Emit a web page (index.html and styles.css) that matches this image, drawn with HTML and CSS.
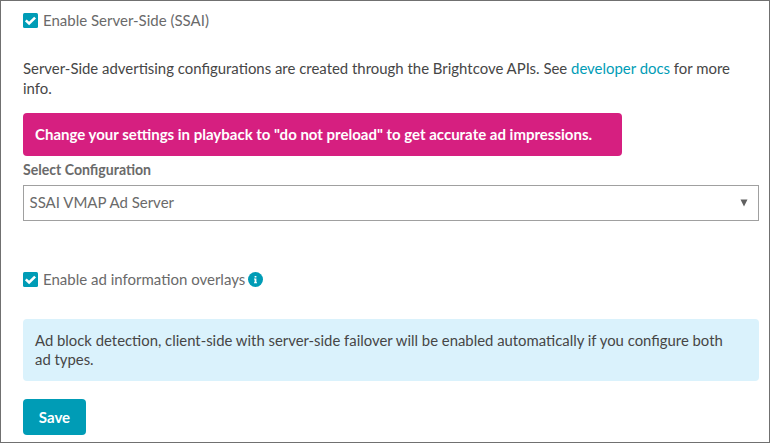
FILE: index.html
```html
<!DOCTYPE html>
<html lang="en">
<head>
<meta charset="utf-8">
<title>Advertising settings</title>
<link rel="stylesheet" href="styles.css">
</head>
<body>
<main class="panel">
  <div class="option">
    <svg class="check" viewBox="0 0 15 15"><rect width="15" height="15" rx="1.500"/><path d="M2.800 7.400 6.100 10.500 12.100 4.600"/></svg>
    <span>Enable Server-Side (SSAI)</span>
  </div>
  <p class="intro">Server-Side advertising configurations are created through the Brightcove APIs. See <a class="link">developer docs</a> for more info.</p>
  <div class="alert">Change your settings in playback to "do not preload" to get accurate ad impressions.</div>
  <div class="label">Select Configuration</div>
  <div class="select"><span>SSAI VMAP Ad Server</span><svg class="arrow" viewBox="0 0 8 8"><path d="M.5.5H7.500L4 7.500Z"/></svg></div>
  <div class="option overlays">
    <svg class="check" viewBox="0 0 15 15"><rect width="15" height="15" rx="1.500"/><path d="M2.800 7.400 6.100 10.500 12.100 4.600"/></svg>
    <span>Enable ad information overlays</span>
    <svg class="info" viewBox="0 0 15 15"><circle cx="7.500" cy="7.500" r="7.500"/><path d="M6.600 4h1.800v1.500H6.600zM6 6.500h2.400v3.800H9v1H6v-1h.6V7.500H6z"/></svg>
  </div>
  <div class="notice">Ad block detection, client-side with server-side failover will be enabled automatically if you configure both ad types.</div>
  <button class="save">Save</button>
</main>
</body>
</html>
```
FILE: styles.css
```css
* { box-sizing: border-box; }
body { margin: 0; background: #fff; }
.panel {
  display: flex;
  flex-direction: column;
  width: 770px;
  height: 443px;
  padding: 9px 10px 0 22px;
  border: 1px solid #707070;
  font: 15px/20px Lato, sans-serif;
  color: #464646;
  overflow: hidden;
}
.option { display: flex; align-items: center; height: 20px; color: #6a6a6a; }
.check { width: 15px; height: 15px; margin-right: 5px; fill: #009cb6; }
.check path { fill: none; stroke: #fff; stroke-width: 2.600; }
.intro { margin: 28px 0 0; font-size: 14.930px; }
.link { color: #009cb6; }
.alert {
  width: 599px;
  height: 43px;
  margin-top: 15px;
  padding: 0 12px;
  border-radius: 4px;
  background: #d61f80;
  color: #fff;
  font-weight: 700;
  font-size: 15px;
  line-height: 43px;
}
/* Slightly condensed bold field label */
.label {
  margin-top: 4px;
  font-size: 15px;
  font-weight: 700;
  color: #6a6a6a;
  line-height: 19px;
  padding-bottom: 1px;
  transform: scaleX(0.94);
  transform-origin: left;
}
.select {
  display: flex;
  align-items: center;
  justify-content: space-between;
  height: 36px;
  margin-top: 5px;
  padding: 0 10px 2px 5.500px;
  border: 1px solid #a0a0a0;
  color: #6a6a6a;
}
.arrow { width: 8px; height: 8px; margin-top: 2px; fill: #606060; }
.overlays { margin-top: 48px; }
.info { width: 15px; height: 15px; margin-left: 3px; fill: #009cb6; }
.info path { fill: #fff; }
.notice {
  height: 62px;
  margin-top: 30px;
  padding: 12px 24px 12px 12px;
  border-radius: 4px;
  background: #daf2fc;
  font-size: 14.870px;
  line-height: 19px;
}
.save {
  width: 63px;
  height: 36px;
  margin-top: 18px;
  padding: 0;
  border: 0;
  border-radius: 4px;
  background: #009cb6;
  color: #fff;
  font: 700 15px/20px Lato, sans-serif;
}
```
